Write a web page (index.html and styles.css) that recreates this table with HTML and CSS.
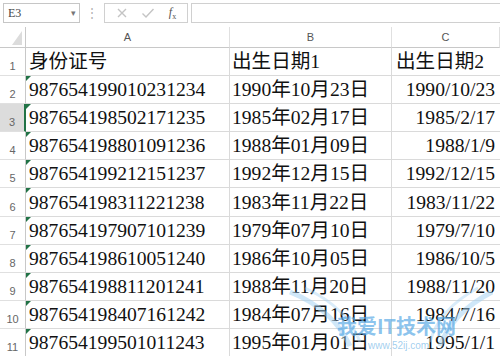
FILE: index.html
```html
<!DOCTYPE html>
<html>
<head>
<meta charset="utf-8">
<link rel="stylesheet" href="styles.css">
</head>
<body>
<div class="app">
  <div class="fbar">
    <div class="namebox"><span>E3</span><span class="arrow">▾</span></div>
    <div class="dots">⋮</div>
    <div class="btns">
      <svg class="ico" width="12" height="12" viewBox="0 0 12 12"><path d="M2 2 L10 10 M10 2 L2 10" stroke="#c4c4c4" stroke-width="1.4" fill="none"/></svg>
      <svg class="ico" width="14" height="12" viewBox="0 0 14 12"><path d="M1.5 6.5 L5 10 L12.5 2" stroke="#c4c4c4" stroke-width="1.4" fill="none"/></svg>
      <span class="fx"><i>f</i><sub>x</sub></span>
    </div>
    <div class="finput"></div>
  </div>
  <div class="sheet">
    <div class="corner"><svg width="10" height="14" viewBox="0 0 10 14"><path d="M10 0 L10 14 L0 14 Z" fill="#dcdcdc"/></svg></div>
    <div class="ch">A</div>
    <div class="ch">B</div>
    <div class="ch">C</div>

    <div class="rh">1</div><div class="c a">身份证号</div><div class="c b">出生日期1</div><div class="c cc hl">出生日期2</div>
    <div class="rh">2</div><div class="c a t">987654199010231234</div><div class="c b">1990年10月23日</div><div class="c cc">1990/10/23</div>
    <div class="rh sel">3</div><div class="c a t">987654198502171235</div><div class="c b">1985年02月17日</div><div class="c cc">1985/2/17</div>
    <div class="rh">4</div><div class="c a t">987654198801091236</div><div class="c b">1988年01月09日</div><div class="c cc">1988/1/9</div>
    <div class="rh">5</div><div class="c a t">987654199212151237</div><div class="c b">1992年12月15日</div><div class="c cc">1992/12/15</div>
    <div class="rh">6</div><div class="c a t">987654198311221238</div><div class="c b">1983年11月22日</div><div class="c cc">1983/11/22</div>
    <div class="rh">7</div><div class="c a t">987654197907101239</div><div class="c b">1979年07月10日</div><div class="c cc">1979/7/10</div>
    <div class="rh">8</div><div class="c a t">987654198610051240</div><div class="c b">1986年10月05日</div><div class="c cc">1986/10/5</div>
    <div class="rh">9</div><div class="c a t">987654198811201241</div><div class="c b">1988年11月20日</div><div class="c cc">1988/11/20</div>
    <div class="rh">10</div><div class="c a t">987654198407161242</div><div class="c b">1984年07月16日</div><div class="c cc">1984/7/16</div>
    <div class="rh">11</div><div class="c a t">987654199501011243</div><div class="c b">1995年01月01日</div><div class="c cc">1995/1/1</div>
  </div>
  <div class="wm">
    <svg class="wings" width="220" height="70" viewBox="0 0 220 70">
      <path d="M10 8 C40 20 60 40 70 62" stroke="#9fd0f2" stroke-width="5" fill="none" opacity="0.5"/>
      <path d="M25 4 C55 18 72 36 80 58" stroke="#9fd0f2" stroke-width="3" fill="none" opacity="0.4"/>
      <path d="M212 8 C185 22 168 40 160 62" stroke="#9fd0f2" stroke-width="5" fill="none" opacity="0.5"/>
      <path d="M198 4 C172 18 156 36 150 58" stroke="#9fd0f2" stroke-width="3" fill="none" opacity="0.4"/>
    </svg>
    <div class="wmt">我爱IT技术网</div>
    <div class="wmu">www.52ij.com</div>
  </div>
</div>
</body>
</html>
```
FILE: styles.css
```css
html, body { margin: 0; padding: 0; background: #fff; }
body { width: 500px; height: 356px; overflow: hidden; font-family: "Liberation Sans", sans-serif; }
.app { position: relative; width: 500px; height: 356px; overflow: hidden; }

.fbar { height: 27px; display: flex; align-items: flex-start; padding-top: 3px; box-sizing: border-box; }
.namebox { margin-left: 3px; width: 77px; height: 20px; box-sizing: border-box; border: 1px solid #c6c6c6; display: flex; align-items: center; justify-content: space-between; padding: 0 3px 0 4px; font-size: 12px; color: #444; font-family: "Liberation Serif", serif; }
.namebox .arrow { font-size: 9px; color: #777; }
.dots { width: 24px; text-align: center; color: #b0b0b0; font-size: 12px; line-height: 20px; }
.btns { width: 84px; height: 20px; box-sizing: border-box; border: 1px solid #d0d0d0; display: flex; align-items: center; justify-content: space-around; padding: 0 4px; }
.fx { font-family: "Liberation Serif", serif; font-size: 12px; color: #555; }
.fx sub { font-size: 8px; }
.finput { margin-left: 3px; flex: 1; height: 20px; border: 1px solid #d0d0d0; border-right: 0; box-sizing: border-box; }

.sheet { display: grid; grid-template-columns: 26px 204px 162px 1fr; grid-template-rows: 21px repeat(11, 28.1px); }
.corner { border-right: 1px solid #c8c8c8; border-bottom: 1px solid #c8c8c8; display: flex; justify-content: flex-end; align-items: flex-end; padding: 0 3px 2px 0; }
.ch { border-right: 1px solid #e0e0e0; border-bottom: 1px solid #c8c8c8; text-align: center; font-size: 11px; color: #555; line-height: 20px; }
.rh { border-right: 1px solid #c8c8c8; border-bottom: 1px solid #e0e0e0; font-size: 11px; color: #666; text-align: center; display: flex; align-items: flex-end; justify-content: center; padding-bottom: 3px; box-sizing: border-box; }
.rh.sel { background: #dcdcdc; border-right: 2px solid #217346; }
.c { position: relative; border-right: 1px solid #dadada; border-bottom: 1px solid #dadada; font-family: "Liberation Serif", "Noto Sans CJK SC", serif; font-size: 19.6px; color: #111; display: flex; align-items: flex-end; box-sizing: border-box; line-height: 22px; padding-bottom: 2px; white-space: nowrap; }
.c.a { padding-left: 3px; }
.c.b { padding-left: 2px; }
.c.cc { justify-content: flex-end; padding-right: 5px; border-right: 0; }
.c.cc.hl { justify-content: flex-start; padding-left: 4px; }
.c.t::before { content: ""; position: absolute; left: 0; top: 0; width: 0; height: 0; border-top: 5px solid #217346; border-right: 5px solid transparent; }

.wm { position: absolute; left: 280px; top: 284px; width: 220px; height: 72px; }
.wings { position: absolute; left: 0; top: 0; }
.wmt { position: absolute; left: 57px; top: 30px; font-family: "Noto Sans CJK SC", sans-serif; font-weight: 700; font-size: 20px; line-height: 24px; color: rgba(90, 170, 230, 0.7); }
.wmu { position: absolute; left: 88px; top: 56px; font-family: "Liberation Sans", sans-serif; font-size: 10px; color: rgba(110, 180, 230, 0.65); }
```
